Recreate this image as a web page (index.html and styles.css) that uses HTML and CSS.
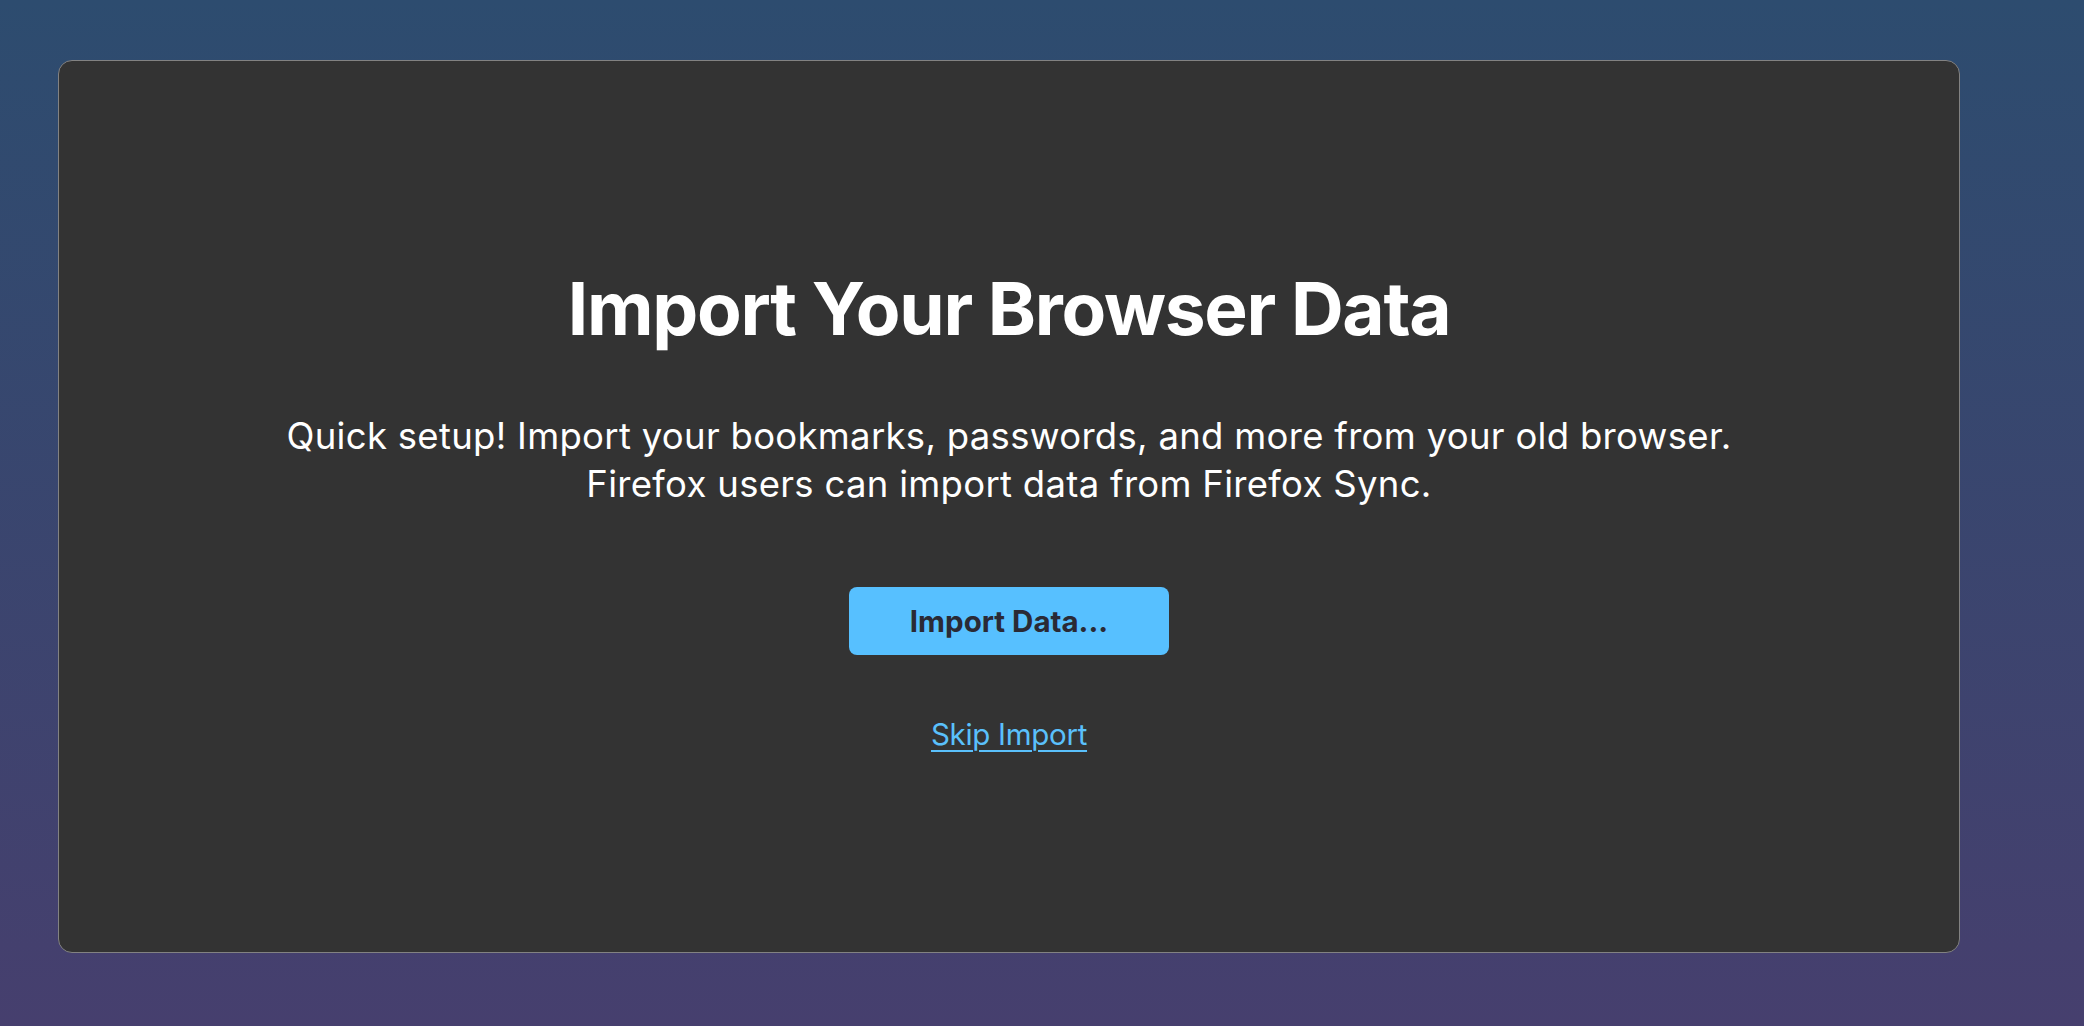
FILE: index.html
```html
<!DOCTYPE html>
<html lang="en">
<head>
  <meta charset="UTF-8">
  <meta name="viewport" content="width=device-width, initial-scale=1">
  <title>Import Your Browser Data</title>
  <link rel="stylesheet" href="styles.css">
</head>
<body>

<div class="import-card">
  <h1>Import Your Browser Data</h1>
  <p class="intro">
    Quick setup! Import your bookmarks, passwords, and more from your old browser.<br>
    Firefox users can import data from Firefox Sync.
  </p>
  <button class="import-button">Import Data...</button>
  <a href="#" class="skip-link">Skip Import</a>
</div>

</body>
</html>
```

FILE: styles.css
```css
html, body {
  margin: 0;
  padding: 0;
  height: 100%;
  overflow: hidden;
}
body {
  background: linear-gradient(to bottom, #2d4c6f 0%, #463f6e 100%);
  font-family: Inter, "Noto Sans", sans-serif;
  color: #fff;
  padding: 60px 0 0 58px;
  box-sizing: border-box;
}
.import-card {
  box-sizing: border-box;
  width: 1902px;
  height: 893px;
  padding-top: 2px;
  background: #333333;
  border: 1.5px solid #828282;
  border-radius: 14px;
  display: flex;
  flex-direction: column;
  align-items: center;
  justify-content: center;
  text-align: center;
}
h1 {
  margin: 0;
  font-size: 73px;
  line-height: 89px;
  font-weight: 700;
  letter-spacing: -1.3px;
}
.intro {
  margin: 59px 0 0;
  font-size: 36.5px;
  line-height: 48px;
  letter-spacing: 0.3px;
}
.import-button {
  margin-top: 79px;
  width: 320px;
  height: 68px;
  border: none;
  border-radius: 8px;
  background: #57c0ff;
  color: #2a2a35;
  font-family: Inter, "Noto Sans", sans-serif;
  font-size: 29.5px;
  font-weight: 700;
  cursor: pointer;
}
.skip-link {
  margin-top: 61px;
  font-size: 29.5px;
  line-height: 36px;
  letter-spacing: -0.3px;
  color: #5ac0fb;
  text-decoration: underline;
  text-underline-offset: 5px;
  text-decoration-thickness: 2px;
}
```
